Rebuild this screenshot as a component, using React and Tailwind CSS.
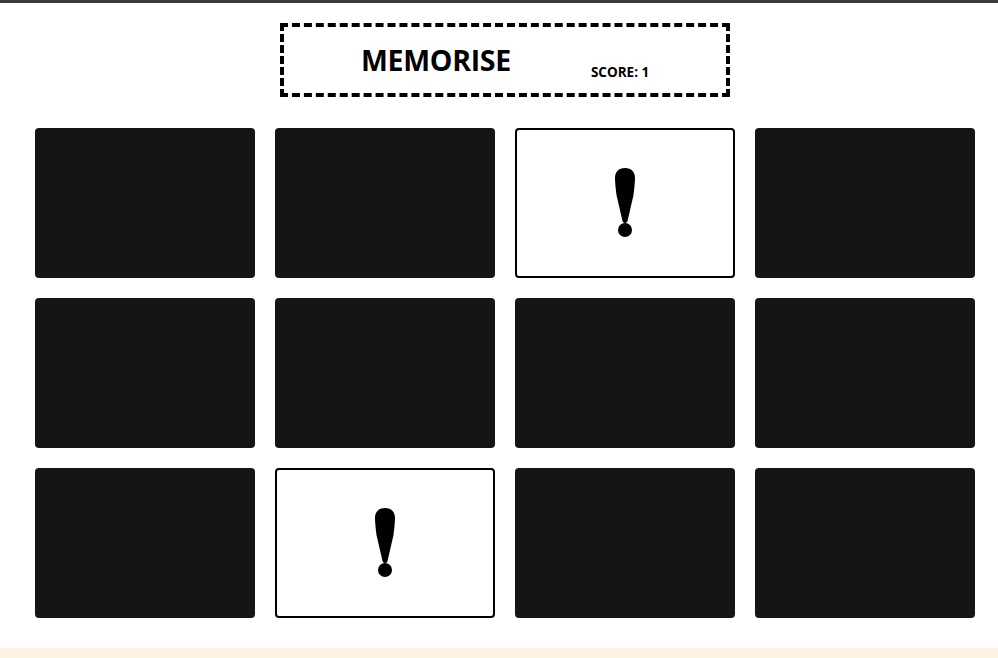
import React from "react";

function Bang() {
  return (
    <svg width="26" height="72" viewBox="0 0 26 72">
      <path d="M13 1 C6.5 1 3 5 3 11 C3 14 3.5 20 4.5 28 L10 52 C10.5 55 11.5 56 13 56 C14.5 56 15.5 55 16 52 L21.5 28 C22.5 20 23 14 23 11 C23 5 19.5 1 13 1 Z" fill="#000" />
      <circle cx="13" cy="63" r="7" fill="#000" />
    </svg>
  );
}

function Card({ open }) {
  if (open) {
    return (
      <div className="h-[150px] rounded-[4px] border-2 border-black bg-white flex items-center justify-center">
        <Bang />
      </div>
    );
  }
  return <div className="h-[150px] rounded-[4px] bg-[#161513]" />;
}

export default function App() {
  const open = [2, 9];
  return (
    <div className="w-[998px] h-[658px] bg-white flex flex-col overflow-hidden" style={{ fontFamily: '"Open Sans", "Liberation Sans", sans-serif' }}>
      <div className="h-[3px] bg-[#3a3a3a]" />
      <div className="flex justify-center pt-[20px] pl-[12px]">
        <div className="w-[450px] h-[74px] border-4 border-dashed border-black flex items-start pl-[77px]">
          <div className="text-[28.5px] font-bold leading-none mt-[19px] tracking-[-0.3px] text-black">MEMORISE</div>
          <div className="text-[13.5px] font-bold leading-none mt-[39px] ml-[80px] text-black">SCORE: 1</div>
        </div>
      </div>
      <div className="grid grid-cols-4 gap-[20px] px-[35px] pr-[23px] mt-[31px]">
        {Array.from({ length: 12 }).map((_, i) => (
          <Card key={i} open={open.includes(i)} />
        ))}
      </div>
      <div className="mt-auto h-[10px] bg-[#fdf2e1]" />
    </div>
  );
}
